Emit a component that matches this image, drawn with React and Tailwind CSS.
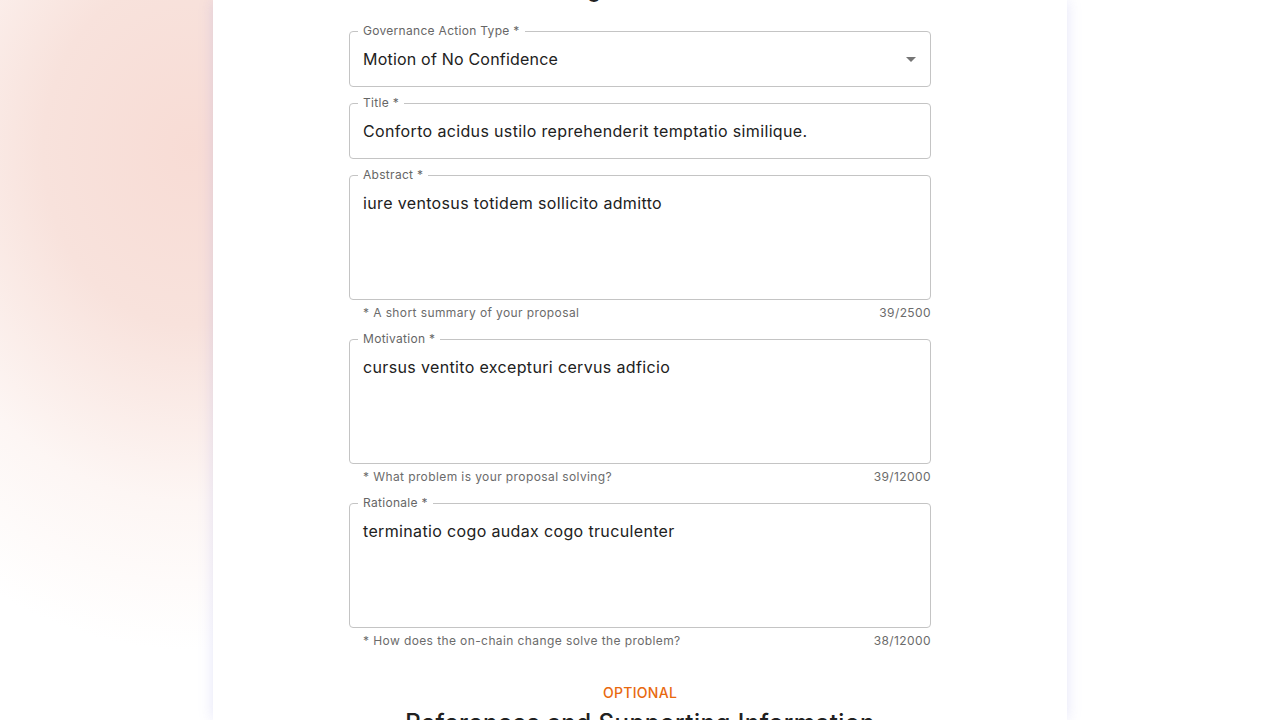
import React from 'react';

const fields = [
  {
    label: 'Title *',
    value: 'Conforto acidus ustilo reprehenderit temptatio similique.',
  },
  {
    label: 'Abstract *',
    value: 'iure ventosus totidem sollicito admitto',
    multiline: true,
    helper: '* A short summary of your proposal',
    count: '39/2500',
  },
  {
    label: 'Motivation *',
    value: 'cursus ventito excepturi cervus adficio',
    multiline: true,
    helper: '* What problem is your proposal solving?',
    count: '39/12000',
  },
  {
    label: 'Rationale *',
    value: 'terminatio cogo audax cogo truculenter',
    multiline: true,
    helper: '* How does the on-chain change solve the problem?',
    count: '38/12000',
  },
];

function FloatingLabel({ children }) {
  return (
    <span className="absolute -top-[9px] left-[8px] bg-white px-[5px] text-[12px] leading-[16px] tracking-[0.3px] text-[#666666]">
      {children}
    </span>
  );
}

function Field({ label, value, multiline, helper, count }) {
  return (
    <div className="flex flex-col">
      <div
        className={`relative rounded-[4px] border border-[#c4c4c4] px-[13px] ${
          multiline ? 'h-[125px] pt-[15px]' : 'flex h-[56px] items-center'
        }`}
      >
        <FloatingLabel>{label}</FloatingLabel>
        <p className="text-[16px] leading-[24px] tracking-[0.35px] text-[#212121]">{value}</p>
      </div>
      {helper && (
        <div className="mt-[3px] flex items-center justify-between pl-[14px] text-[12px] leading-[20px] tracking-[0.4px] text-[#6b6b6b]">
          <span>{helper}</span>
          <span>{count}</span>
        </div>
      )}
    </div>
  );
}

export default function App() {
  return (
    <div className="h-[720px] overflow-hidden bg-white bg-[radial-gradient(ellipse_420px_500px_at_190px_150px,#f8dcd5_0%,#f8e2dc_35%,rgba(252,242,239,0.7)_70%,rgba(255,255,255,0)_100%)] font-['Inter','Open_Sans',sans-serif]">
      <div className="mx-auto flex h-full w-[854px] flex-col bg-white shadow-[0_0_14px_rgba(120,120,220,0.2)]">
        <div className="-mt-[27px] flex flex-col items-center">
          <h2 className="text-[22px] font-medium leading-[33px] tracking-[0.5px] text-[#212121]">
            Create a governance action
          </h2>

          <div className="mt-[25px] flex w-[582px] flex-col gap-[16px]">
            <div className="relative flex h-[56px] items-center justify-between rounded-[4px] border border-[#c4c4c4] px-[13px]">
              <FloatingLabel>Governance Action Type *</FloatingLabel>
              <p className="text-[16px] leading-[24px] tracking-[0.2px] text-[#212121]">Motion of No Confidence</p>
              <svg width="10" height="5" viewBox="0 0 10 5" className="mr-[1px]">
                <path d="M0 0 L10 0 L5 5 Z" fill="#757575" />
              </svg>
            </div>
            {fields.map((f) => (
              <Field key={f.label} {...f} />
            ))}
          </div>

          <p className="mt-[32px] text-[14px] font-medium leading-[20px] tracking-[0.3px] text-[#e8690f]">
            OPTIONAL
          </p>
          <h2 className="mt-[2px] text-[24px] font-medium leading-[36px] tracking-[0.5px] text-[#212121]">
            References and Supporting Information
          </h2>
        </div>
      </div>
    </div>
  );
}
